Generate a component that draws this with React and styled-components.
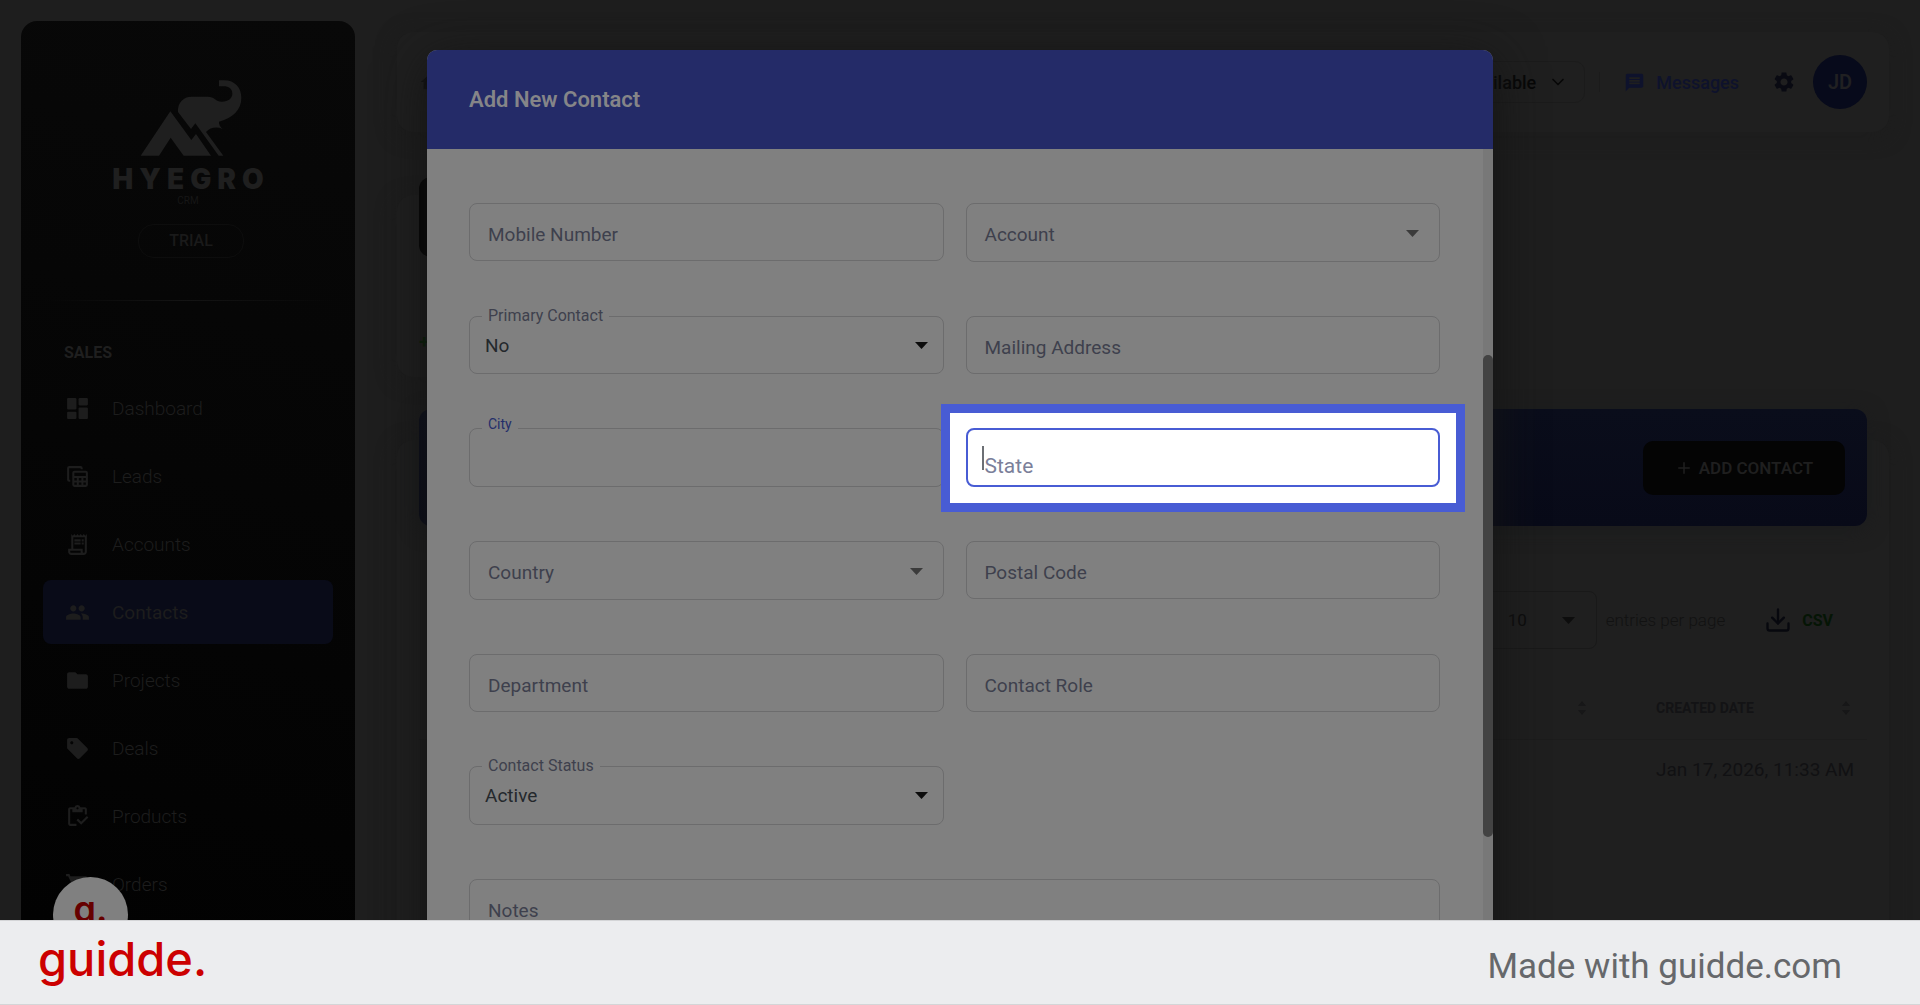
import React from "react";
import styled, {createGlobalStyle, css} from "styled-components";
import {
    MdFolder,
    MdHome,
    MdMessage,
    MdOutlineInventory,
    MdOutlineReceiptLong,
    MdPeople,
    MdSell,
    MdSettings,
    MdShoppingCart
} from "react-icons/md";
import {ChevronDown, Download, Plus} from "lucide-react";

const DashboardIcon = () => (
    <svg viewBox="0 0 24 24" fill="currentColor">
        <rect x="2" y="2" width="9" height="11" rx="1"/>
        <rect x="2" y="15" width="9" height="7" rx="1"/>
        <rect x="13" y="2" width="9" height="7" rx="1"/>
        <rect x="13" y="11" width="9" height="11" rx="1"/>
    </svg>
)

const LeadsIcon = () => (
    <svg viewBox="0 0 24 24" fill="none" stroke="currentColor" strokeWidth="2">
        <path d="M5 16H4a1 1 0 0 1-1-1V4a1 1 0 0 1 1-1h11a1 1 0 0 1 1 1v1"/>
        <rect x="8" y="7.500" width="13" height="13.500" rx="1"/>
        <path d="M8 12.500h13M8 16.800h13M12.300 12v9M16.700 12v9"/>
    </svg>
)

const Logo = () => (
    <LogoMark viewBox="420 238 306 228" fill="currentColor" aria-hidden="true">
        <path d="M422 465 511 332 574 418 588 400 633 465H551L512 411 477 465Z"/>
        <path d="M657 239H672C705 239 724 262 724 291C724 328 700 350 657 363C656 372 661 378 668 385C650 377 631 380 618 394L670 465H656L586 368 573 385 534 334C532 306 550 288 575 288H622C646 288 645 303 666 303C685 303 697 292 697 279C697 264 685 257 672 257H657Z"/>
    </LogoMark>
)

const Arrow = () => (
    <svg width="13" height="7" viewBox="0 0 13 7" fill="currentColor" aria-hidden="true">
        <path d="M0 0h13L6.500 7z"/>
    </svg>
)

const SortIcon = () => (
    <SortArrows viewBox="0 0 8 14" fill="currentColor" aria-hidden="true">
        <path d="M0 5 4 0 8 5zM0 9h8L4 14z"/>
    </SortArrows>
)

const menu = [
    {label: "Dashboard", icon: <DashboardIcon/>},
    {label: "Leads", icon: <LeadsIcon/>},
    {label: "Accounts", icon: <MdOutlineReceiptLong/>},
    {label: "Contacts", icon: <MdPeople/>, active: true},
    {label: "Projects", icon: <MdFolder/>},
    {label: "Deals", icon: <MdSell/>},
    {label: "Products", icon: <MdOutlineInventory/>},
    {label: "Orders", icon: <MdShoppingCart/>}
];

const fields = [
    {id: "mobile", label: "Mobile Number"},
    {id: "account", label: "Account", kind: "combo"},
    {id: "primary", label: "Primary Contact", kind: "select", value: "No"},
    {id: "mailing", label: "Mailing Address"},
    {id: "city", label: "City", kind: "blurred"},
    {id: "state", label: "State", kind: "focused"},
    {id: "country", label: "Country", kind: "combo"},
    {id: "postal", label: "Postal Code"},
    {id: "department", label: "Department"},
    {id: "role", label: "Contact Role"},
    {id: "status", label: "Contact Status", kind: "select", value: "Active", tall: true},
    {id: "notes", label: "Notes", kind: "notes"}
];

const Field = ({id, label, kind, value, tall}) => {
    if (kind === "select") {
        return (
            <FieldBox $tall={tall}>
                <Select id={id} defaultValue={value}>
                    <option>{value}</option>
                </Select>
                <FloatingLabel htmlFor={id}>{label}</FloatingLabel>
                <FieldArrow $dark><Arrow/></FieldArrow>
            </FieldBox>
        )
    }
    if (kind === "notes") {
        return (
            <FieldBox $wide>
                <TextArea id={id} rows={4}/>
                <RestingLabel htmlFor={id}>{label}</RestingLabel>
            </FieldBox>
        )
    }
    if (kind === "focused") {
        return (
            <FieldBox $tall $spotlight>
                <Input id={id} type="text" $focused/>
                <RestingLabel htmlFor={id} $focused>{label}</RestingLabel>
                <Caret/>
            </FieldBox>
        )
    }
    return (
        <FieldBox $tall={kind === "combo" || kind === "blurred"}>
            <Input id={id} type="text"/>
            {kind === "blurred"
                ? <FloatingLabel htmlFor={id} $blurred>{label}</FloatingLabel>
                : <RestingLabel htmlFor={id}>{label}</RestingLabel>}
            {kind === "combo" && <FieldArrow><Arrow/></FieldArrow>}
        </FieldBox>
    )
}

const Sidebar = () => (
    <SidebarContainer>
        <Logo/>
        <LogoName>HYEGRO</LogoName>
        <LogoSub>CRM</LogoSub>
        <Plan>TRIAL</Plan>
        <Divider/>
        <MenuTitle>SALES</MenuTitle>
        <Menu>
            {menu.map(({label, icon, active}) => (
                <MenuItem key={label} href="#" $active={active}>
                    {icon}
                    {label}
                </MenuItem>
            ))}
        </Menu>
    </SidebarContainer>
)

const App = () => (
    <Screen>
        <GlobalStyle/>
        <Stage>
            <Page>
                <Sidebar/>
                <Main>
                    <TopBar>
                        <MdHome size={22}/>
                        <TopActions>
                            <StatusButton>Available <ChevronDown size={20}/></StatusButton>
                            <TopDivider/>
                            <MessagesLink href="#"><MdMessage size={21}/>Messages</MessagesLink>
                            <IconButton aria-label="Settings"><MdSettings size={24}/></IconButton>
                            <Avatar>JD</Avatar>
                        </TopActions>
                    </TopBar>
                    <StatCard>
                        <StatBadge/>
                        <StatTrend>+</StatTrend>
                    </StatCard>
                    <ListCard>
                        <Banner>
                            <AddButton><Plus size={18}/>ADD CONTACT</AddButton>
                        </Banner>
                        <ListTools>
                            <PageSize>
                                <select aria-label="entries per page" defaultValue="10">
                                    <option>10</option>
                                </select>
                                <Arrow/>
                            </PageSize>
                            <EntriesText>entries per page</EntriesText>
                            <CsvButton><Download size={28}/>CSV</CsvButton>
                        </ListTools>
                        <Table>
                            <thead>
                            <tr>
                                <th/>
                                <th><HeadCell><span/><SortIcon/></HeadCell></th>
                                <th><HeadCell>CREATED DATE<SortIcon/></HeadCell></th>
                            </tr>
                            </thead>
                            <tbody>
                            <tr>
                                <td/>
                                <td/>
                                <td>Jan 17, 2026, 11:33 AM</td>
                            </tr>
                            </tbody>
                        </Table>
                    </ListCard>
                </Main>
            </Page>
            <Overlay>
                <Modal role="dialog" aria-labelledby="modal-title">
                    <ModalHeader id="modal-title">Add New Contact</ModalHeader>
                    <ModalBody>
                        <Form>
                            {fields.map((field) => <Field key={field.id} {...field}/>)}
                        </Form>
                        <ScrollTrack><ScrollThumb/></ScrollTrack>
                    </ModalBody>
                </Modal>
            </Overlay>
            <GuideBadge>g.</GuideBadge>
        </Stage>
        <Footer>
            <Brand>guidde.</Brand>
            <MadeWith>Made with guidde.com</MadeWith>
        </Footer>
    </Screen>
)
export default App;

const GlobalStyle = createGlobalStyle`
  * {
    box-sizing: border-box;
  }

  body {
    margin: 0;
    background-color: #1e1e1e;
    font-family: Roboto, "Liberation Sans", sans-serif;
  }

  button, input, select, textarea {
    font-family: inherit;
    margin: 0;
  }

  a {
    text-decoration: none;
  }
`;

const Screen = styled.div`
  display: flex;
  flex-direction: column;
  height: 100vh;
`;

const Stage = styled.div`
  position: relative;
  flex: 1;
  min-height: 0;
  overflow: hidden;
`;

const Page = styled.div`
  display: flex;
  height: 100%;
`;

const SidebarContainer = styled.aside`
  display: flex;
  flex-direction: column;
  align-items: center;
  flex: none;
  width: 334px;
  margin: 21px 0 0 21px;
  padding-top: 59px;
  border-radius: 16px 16px 0 0;
  background: linear-gradient(195deg, #080808, #020202);
  color: #1f1f1f;
`;

const LogoMark = styled.svg`
  flex: none;
  width: 102px;
  height: 76px;
  margin-left: 6px;
`;

const LogoName = styled.div`
  margin-top: 7px;
  padding-left: 6px;
  font-family: Inter, sans-serif;
  font-size: 28px;
  font-weight: 900;
  line-height: 32px;
  letter-spacing: 6px;
`;

const LogoSub = styled.div`
  font-size: 10px;
  line-height: 12px;
  color: #161616;
`;

const Plan = styled.div`
  margin: 17px 0 0 6px;
  padding: 0 30px;
  border: 1px solid #0d0d0d;
  border-radius: 16px;
  font-size: 16px;
  font-weight: 500;
  line-height: 32px;
  color: #1a1a1a;
`;

const Divider = styled.hr`
  width: 290px;
  height: 1px;
  margin: 42px 0;
  border: none;
  background: linear-gradient(90deg, transparent, #141414, transparent);
`;

const MenuTitle = styled.h2`
  align-self: flex-start;
  margin: 0 0 13px 43px;
  font-size: 16px;
  font-weight: 700;
  line-height: 20px;
`;

const Menu = styled.nav`
  display: flex;
  flex-direction: column;
  gap: 4px;
  align-self: stretch;
  margin: 0 22px;
`;

const MenuItem = styled.a`
  display: flex;
  align-items: center;
  gap: 22px;
  flex: none;
  height: 64px;
  padding-left: 22px;
  border-radius: 8px;
  color: #1d1d1d;
  font-size: 19px;
  font-weight: ${({$active}) => $active ? 400 : 300};
  background-color: ${({$active}) => $active ? "#090b18" : "transparent"};

  > svg {
    width: 25px;
    height: 25px;
  }
`;

const Main = styled.main`
  display: flex;
  flex-direction: column;
  gap: 63px;
  flex: 1;
  min-width: 0;
  padding: 32px 31px 0 42px;
`;

const Card = styled.section`
  flex: none;
  padding: 0 22px;
  border-radius: 16px;
  background-color: #1f1f1f;
  box-shadow: 0 4px 20px #1d1d1d;
`;

const TopBar = styled(Card)`
  display: flex;
  align-items: center;
  justify-content: space-between;
  height: 100px;
  color: #101010;
`;

const TopActions = styled.div`
  display: flex;
  align-items: center;
`;

const StatusButton = styled.button`
  display: flex;
  align-items: center;
  gap: 12px;
  height: 42px;
  padding: 0 16px;
  border: 1px solid #1b1b1b;
  border-radius: 10px;
  background: none;
  color: #070707;
  font-size: 18px;
  font-weight: 500;
`;

const TopDivider = styled.span`
  width: 1px;
  height: 20px;
  margin: 0 24px 0 14px;
  background-color: #1b1b1b;
`;

const MessagesLink = styled.a`
  display: flex;
  align-items: center;
  gap: 11px;
  color: #0e122c;
  font-size: 18px;
  font-weight: 500;
`;

const IconButton = styled.button`
  display: flex;
  margin: 0 17px 0 33px;
  padding: 0;
  border: none;
  background: none;
  color: #090a12;
`;

const Avatar = styled.div`
  width: 54px;
  border-radius: 50%;
  background-color: #070a1b;
  color: #202022;
  font-size: 20px;
  font-weight: 600;
  line-height: 54px;
  text-align: center;
`;

const StatCard = styled(Card)`
  width: 25%;
  height: 182px;
`;

const StatBadge = styled.div`
  width: 80px;
  height: 80px;
  margin-top: -18px;
  border-radius: 12px;
  background-color: #020202;
`;

const StatTrend = styled.div`
  margin-top: 72px;
  color: #062006;
  font-size: 19px;
  font-weight: 700;
  line-height: 26px;
`;

const ListCard = styled(Card)`
  height: 600px;
`;

const Banner = styled.header`
  display: flex;
  align-items: center;
  justify-content: flex-end;
  height: 117px;
  margin-top: -31px;
  padding-right: 22px;
  border-radius: 12px;
  background: linear-gradient(180deg, #0a0d1b, #080a18);
  box-shadow: 0 4px 20px #1b1c1d;
`;

const AddButton = styled.button`
  display: flex;
  align-items: center;
  justify-content: center;
  gap: 6px;
  width: 202px;
  height: 54px;
  border: none;
  border-radius: 10px;
  background-color: #040404;
  color: #1f1f1f;
  font-size: 17px;
  font-weight: 600;
`;

const ListTools = styled.div`
  display: flex;
  align-items: center;
  justify-content: flex-end;
  margin-top: 65px;
  padding-right: 34px;
`;

const PageSize = styled.div`
  display: flex;
  align-items: center;
  width: 116px;
  height: 58px;
  padding-right: 21px;
  border: 1px solid #191919;
  border-radius: 8px;
  color: #0d0d0d;

  > select {
    appearance: none;
    flex: 1;
    padding: 0 0 0 26px;
    border: none;
    background: none;
    color: #0d0d0d;
    font-size: 17px;
  }
`;

const EntriesText = styled.span`
  margin: 0 39px 0 9px;
  color: #121212;
  font-size: 17px;
  font-weight: 300;
`;

const CsvButton = styled.button`
  display: flex;
  align-items: center;
  gap: 10px;
  padding: 0;
  border: none;
  background: none;
  color: #051505;
  font-size: 16px;
  font-weight: 700;

  > svg {
    color: #07080e;
  }
`;

const Table = styled.table`
  width: 100%;
  margin-top: 28px;
  border-collapse: collapse;
  table-layout: fixed;
  color: #111113;

  th {
    height: 62px;
    padding: 0;
    border-bottom: 1px solid #1c1c1c;
  }

  td {
    height: 60px;
    padding: 0;
    font-size: 19px;
    white-space: nowrap;
  }

  th:nth-child(n + 2) {
    width: 264px;
    padding: 0 17px 0 53px;
  }

  td:nth-child(n + 2) {
    padding-left: 53px;
  }
`;

const HeadCell = styled.div`
  display: flex;
  align-items: center;
  justify-content: space-between;
  color: #131315;
  font-size: 14px;
  font-weight: 700;
`;

const SortArrows = styled.svg`
  width: 8px;
  height: 14px;
  color: #171718;
`;

const Overlay = styled.div`
  position: absolute;
  inset: 0;
  display: flex;
  justify-content: center;
  align-items: flex-start;
  padding-top: 50px;
`;

const Modal = styled.div`
  width: 100%;
  max-width: 1066px;
  border-radius: 10px;
  overflow: hidden;
  background-color: #808080;
  box-shadow: 0 10px 50px #141414;
`;

const ModalHeader = styled.h1`
  margin: 0;
  padding: 35px 42px 34px;
  background-color: #242b68;
  color: #858588;
  font-size: 22px;
  font-weight: 600;
  line-height: 30px;
`;

const ModalBody = styled.div`
  display: flex;
`;

const Form = styled.form`
  display: grid;
  grid-template-columns: 1fr 1fr;
  align-items: start;
  gap: 54px 22px;
  flex: 1;
  padding: 54px 43px 54px 42px;
`;

/* control, label and arrow share one grid cell */
const FieldBox = styled.div`
  position: relative;
  display: grid;
  grid-template-rows: ${({$tall}) => $tall ? "59px" : "minmax(58px, auto)"};
  grid-column: ${({$wide}) => $wide ? "1 / -1" : "auto"};

  > * {
    grid-area: 1 / 1;
  }

  ${({$spotlight}) => $spotlight && css`
    &::before {
      content: "";
      position: absolute;
      inset: -24px -25px -25px;
      border: 9px solid #485cd4;
      background-color: #ffffff;
    }
  `}
`;

const control = css`
  width: 100%;
  padding: 0 17px;
  border: 1px solid #6c6c6d;
  border-radius: 8px;
  outline: none;
  background: none;
  color: #24282c;
  font-size: 19px;
`;

const Input = styled.input`
  ${control}
  ${({$focused}) => $focused && css`
    position: relative;
    border: 2px solid #485cd4;
  `}
`;

const TextArea = styled.textarea`
  ${control}
  padding-top: 20px;
  resize: none;
`;

const Select = styled.select`
  ${control}
  appearance: none;
  padding: 0 15px;
`;

const RestingLabel = styled.label`
  position: relative;
  justify-self: start;
  margin: ${({$focused}) => $focused ? "26px 0 0 19px" : "20px 0 0 19px"};
  color: ${({$focused}) => $focused ? "#7b809a" : "#3e404d"};
  font-size: ${({$focused}) => $focused ? 21 : 19}px;
  line-height: 24px;
`;

const FloatingLabel = styled.label`
  justify-self: start;
  align-self: start;
  margin: ${({$blurred}) => $blurred ? "-14px" : "-10px"} 0 0 13px;
  padding: 0 6px;
  background-color: #808080;
  color: ${({$blurred}) => $blurred ? "#242e6a" : "#3e404d"};
  font-size: ${({$blurred}) => $blurred ? 14 : 16}px;
  line-height: 20px;
`;

const FieldArrow = styled.span`
  display: flex;
  justify-self: end;
  align-self: ${({$dark}) => $dark ? "center" : "start"};
  margin: ${({$dark}) => $dark ? "0 16px 0 0" : "27px 21px 0 0"};
  color: ${({$dark}) => $dark ? "#0c0c0c" : "#3b3b3b"};
  pointer-events: none;
`;

const Caret = styled.span`
  position: relative;
  width: 2px;
  height: 24px;
  margin: 18px 0 0 16px;
  background-color: #6c6f74;
`;

const ScrollTrack = styled.div`
  width: 10px;
  padding-top: 206px;
  background-color: #787878;
`;

const ScrollThumb = styled.div`
  height: 482px;
  border-radius: 5px;
  background-color: #434343;
`;

const GuideBadge = styled.div`
  position: absolute;
  left: 53px;
  bottom: -32px;
  width: 75px;
  height: 75px;
  border-radius: 50%;
  background-color: #808080;
  color: #660000;
  font-family: Inter, sans-serif;
  font-size: 36px;
  font-weight: 600;
  line-height: 64px;
  text-align: center;
`;

const Footer = styled.footer`
  position: relative;
  display: flex;
  align-items: center;
  justify-content: space-between;
  flex: none;
  padding: 0 78px 0 38px;
  border: solid #d4d5d7;
  border-width: 1px 0;
  background-color: #ecedef;
`;

const Brand = styled.div`
  padding-bottom: 8px;
  color: #cc0000;
  font-family: Inter, sans-serif;
  font-size: 47px;
  font-weight: 500;
  line-height: 75px;
`;

const MadeWith = styled.div`
  padding-top: 8px;
  color: #66686b;
  font-size: 35px;
  line-height: 75px;
`;
